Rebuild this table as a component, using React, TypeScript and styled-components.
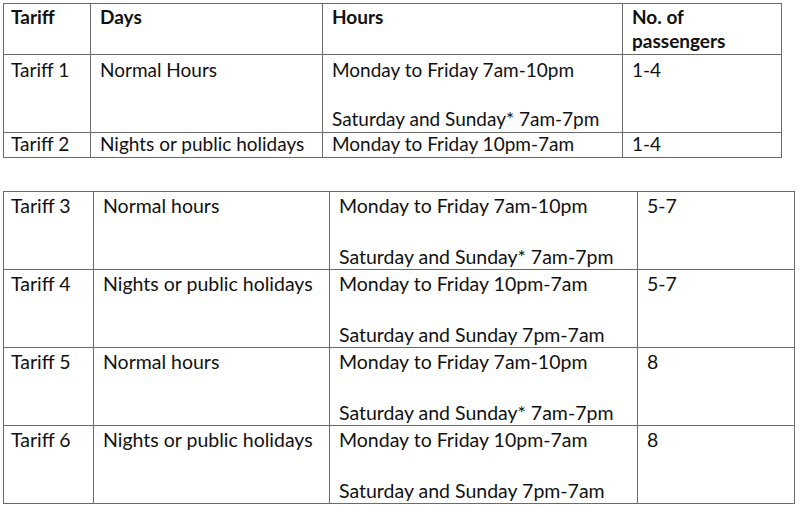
import * as React from 'react';
import styled, { createGlobalStyle } from 'styled-components';

type Row = {
    height: number;
    padTop: number;
    lineHeight?: number;
    bold?: boolean;
    cells: string[][];
};

type TableData = {
    columns: number[];
    fontSize: number;
    lineHeight: number;
    rows: Row[];
};

const firstTable: TableData = {
    columns: [87, 232, 300, 159],
    fontSize: 19,
    lineHeight: 24.5,
    rows: [
        {
            height: 51,
            padTop: 0.5,
            bold: true,
            cells: [['Tariff'], ['Days'], ['Hours'], ['No. of', 'passengers']],
        },
        {
            height: 78,
            padTop: 2.5,
            cells: [
                ['Tariff 1'],
                ['Normal Hours'],
                ['Monday to Friday 7am-10pm', '', 'Saturday and Sunday* 7am-7pm'],
                ['1-4'],
            ],
        },
        {
            height: 25,
            padTop: 0,
            lineHeight: 22,
            cells: [['Tariff 2'], ['Nights or public holidays'], ['Monday to Friday 10pm-7am'], ['1-4']],
        },
    ],
};

const secondTable: TableData = {
    columns: [90, 236, 308, 157],
    fontSize: 19.5,
    lineHeight: 25.5,
    rows: [
        {
            height: 78,
            padTop: 0.5,
            cells: [
                ['Tariff 3'],
                ['Normal hours'],
                ['Monday to Friday 7am-10pm', '', 'Saturday and Sunday* 7am-7pm'],
                ['5-7'],
            ],
        },
        {
            height: 78,
            padTop: 0.5,
            cells: [
                ['Tariff 4'],
                ['Nights or public holidays'],
                ['Monday to Friday 10pm-7am', '', 'Saturday and Sunday 7pm-7am'],
                ['5-7'],
            ],
        },
        {
            height: 78,
            padTop: 0.5,
            cells: [
                ['Tariff 5'],
                ['Normal hours'],
                ['Monday to Friday 7am-10pm', '', 'Saturday and Sunday* 7am-7pm'],
                ['8'],
            ],
        },
        {
            height: 78,
            padTop: 0.5,
            cells: [
                ['Tariff 6'],
                ['Nights or public holidays'],
                ['Monday to Friday 10pm-7am', '', 'Saturday and Sunday 7pm-7am'],
                ['8'],
            ],
        },
    ],
};

const App: React.FC = () => {
    return (
        <>
            <GlobalStyle />
            <Page>
                <TariffTable data={firstTable} />
                <TariffTable data={secondTable} />
            </Page>
        </>
    );
};

const TariffTable: React.FC<{ data: TableData }> = ({ data }) => {
    const columns = data.columns.map((w) => `${w}px`).join(' ');
    const rows = data.rows.map((r) => `${r.height}px`).join(' ');
    return (
        <Grid $columns={columns} $rows={rows} $fontSize={data.fontSize} $lineHeight={data.lineHeight}>
            {data.rows.map((row, i) =>
                row.cells.map((lines, j) => (
                    <Cell
                        key={`${i}-${j}`}
                        $padTop={row.padTop}
                        $lineHeight={row.lineHeight}
                        $bold={row.bold}
                    >
                        {lines.map((line, k) => (
                            <Line key={k}>{line}</Line>
                        ))}
                    </Cell>
                )),
            )}
        </Grid>
    );
};

const GlobalStyle = createGlobalStyle`
    html, body {
        margin: 0;
        padding: 0;
        background: #ffffff;
    }
    body {
        font-family: Lato, "Liberation Sans", sans-serif;
        color: #111111;
    }
`;

const Page = styled.div`
    display: flex;
    flex-direction: column;
    align-items: flex-start;
    gap: 33px;
    padding: 3px 0 0 3px;
`;

const Grid = styled.div<{ $columns: string; $rows: string; $fontSize: number; $lineHeight: number }>`
    display: grid;
    grid-template-columns: ${(p) => p.$columns};
    grid-template-rows: ${(p) => p.$rows};
    border-top: 1px solid #6a6a6a;
    border-left: 1px solid #6a6a6a;
    font-size: ${(p) => p.$fontSize}px;
    line-height: ${(p) => p.$lineHeight}px;
`;

const Cell = styled.div<{ $padTop: number; $lineHeight?: number; $bold?: boolean }>`
    box-sizing: border-box;
    border-right: 1px solid #6a6a6a;
    border-bottom: 1px solid #6a6a6a;
    padding: ${(p) => p.$padTop}px 0 0 9px;
    white-space: nowrap;
    font-weight: ${(p) => (p.$bold ? 700 : 400)};
    ${(p) => (p.$lineHeight ? `line-height: ${p.$lineHeight}px;` : '')}

    &:nth-child(4n + 1) {
        padding-left: 7px;
    }
`;

const Line = styled.div`
    min-height: 1lh;
`;

export default App;
